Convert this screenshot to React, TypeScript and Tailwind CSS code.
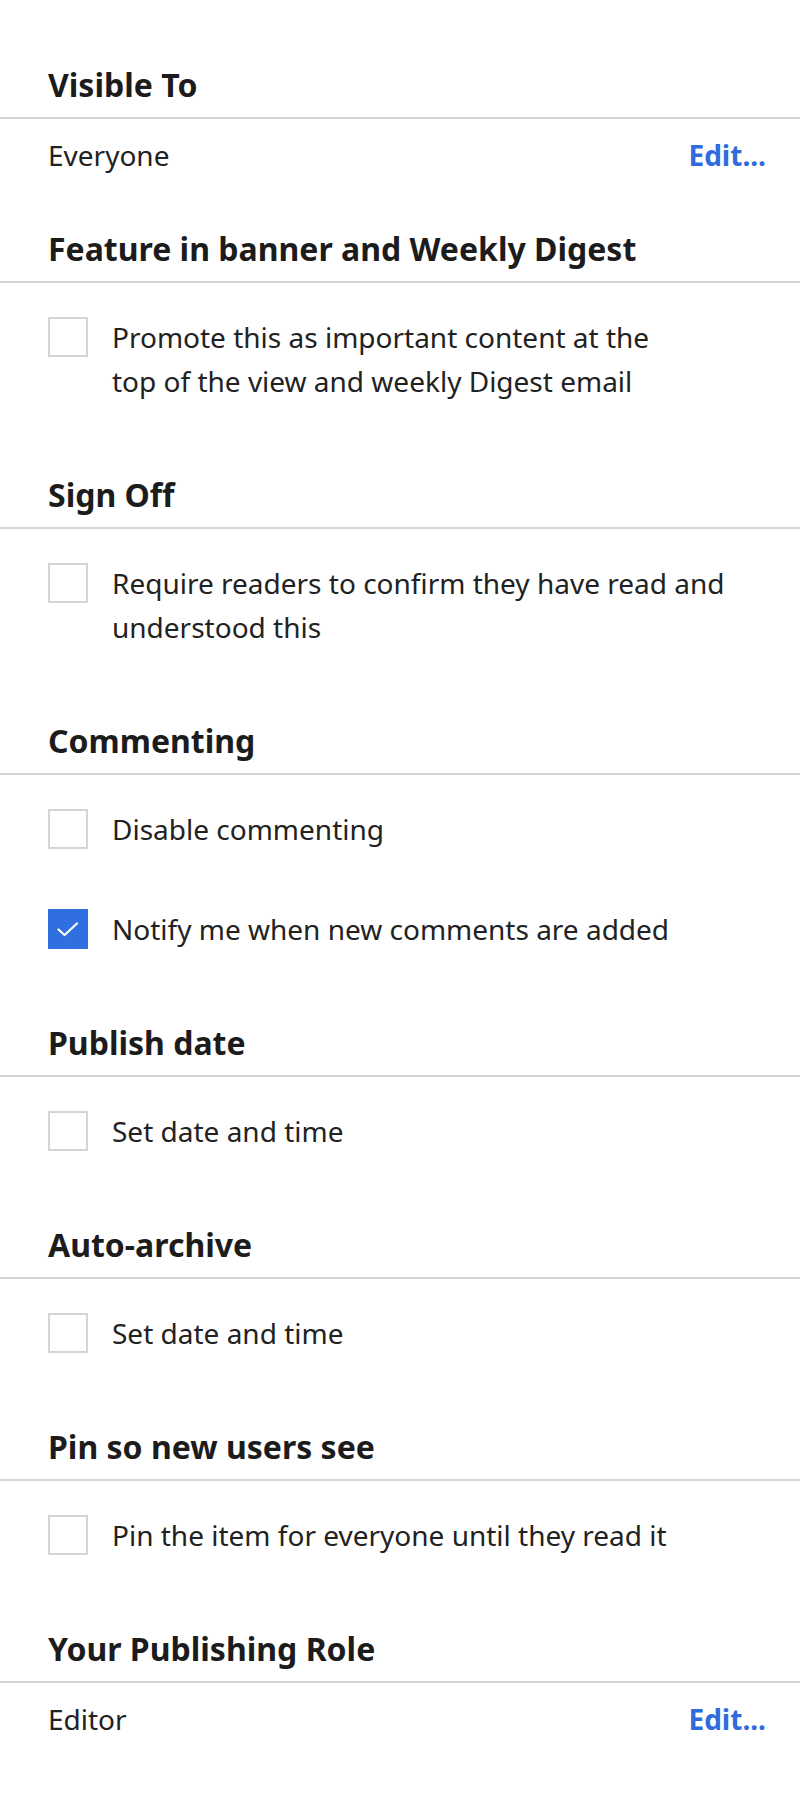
import React, { useState } from 'react';

type Option = { id: string; label: React.ReactNode; checked?: boolean; narrow?: boolean };

function Checkbox({ checked }: { checked: boolean }) {
  if (checked) {
    return (
      <span className="mt-[2px] flex h-[40px] w-[40px] shrink-0 items-center justify-center bg-[#2f6fe0]">
        <svg width="40" height="40" viewBox="0 0 40 40" fill="none">
          <path d="M10.5 20.5 L16.5 26 L29 14.5" stroke="#ffffff" strokeWidth="2.2" strokeLinecap="round" strokeLinejoin="round" />
        </svg>
      </span>
    );
  }
  return <span className="mt-[2px] block h-[40px] w-[40px] shrink-0 border-2 border-[#d6d6d6] bg-white" />;
}

function Heading({ children }: { children: React.ReactNode }) {
  return (
    <div>
      <h2 className="px-[48px] pb-[12px] text-[32px] leading-[40px] font-bold text-[#1c1c1c]">{children}</h2>
      <div className="h-[2px] bg-[#d6d6d6]" />
    </div>
  );
}

function ValueRow({ value }: { value: string }) {
  return (
    <div className="flex items-start justify-between pt-[14px] pr-[34px] pl-[48px] pb-[52px] text-[28px] leading-[44px]">
      <span className="text-[#222222]">{value}</span>
      <button className="font-bold text-[#2f6bdd]">Edit...</button>
    </div>
  );
}

function CheckGroup({ options }: { options: Option[] }) {
  const [state, setState] = useState<Record<string, boolean>>(
    Object.fromEntries(options.map((o) => [o.id, !!o.checked]))
  );

  return (
    <div className="flex flex-col gap-[56px] pt-[32px] pr-[34px] pl-[48px] pb-[72px]">
      {options.map((o) => (
        <label
          key={o.id}
          className="flex cursor-pointer items-start gap-[24px]"
          onClick={() => setState((s) => ({ ...s, [o.id]: !s[o.id] }))}
        >
          <Checkbox checked={state[o.id]} />
          <span className={`text-[28px] leading-[44px] text-[#222222] ${o.narrow ? 'max-w-[560px]' : ''}`}>
            {o.label}
          </span>
        </label>
      ))}
    </div>
  );
}

export default function App() {
  return (
    <div className="min-h-[1793px] bg-white pt-[65px] font-['Noto_Sans',sans-serif]">
      <Heading>Visible To</Heading>
      <ValueRow value="Everyone" />

      <Heading>Feature in banner and Weekly Digest</Heading>
      <CheckGroup
        options={[
          {
            id: 'promote',
            narrow: true,
            label: 'Promote this as important content at the top of the view and weekly Digest email',
          },
        ]}
      />

      <Heading>Sign Off</Heading>
      <CheckGroup
        options={[{ id: 'signoff', label: 'Require readers to confirm they have read and understood this' }]}
      />

      <Heading>Commenting</Heading>
      <CheckGroup
        options={[
          { id: 'disable', label: 'Disable commenting' },
          { id: 'notify', label: 'Notify me when new comments are added', checked: true },
        ]}
      />

      <Heading>Publish date</Heading>
      <CheckGroup options={[{ id: 'publish', label: 'Set date and time' }]} />

      <Heading>Auto-archive</Heading>
      <CheckGroup options={[{ id: 'archive', label: 'Set date and time' }]} />

      <Heading>Pin so new users see</Heading>
      <CheckGroup options={[{ id: 'pin', label: 'Pin the item for everyone until they read it' }]} />

      <Heading>Your Publishing Role</Heading>
      <ValueRow value="Editor" />
    </div>
  );
}
